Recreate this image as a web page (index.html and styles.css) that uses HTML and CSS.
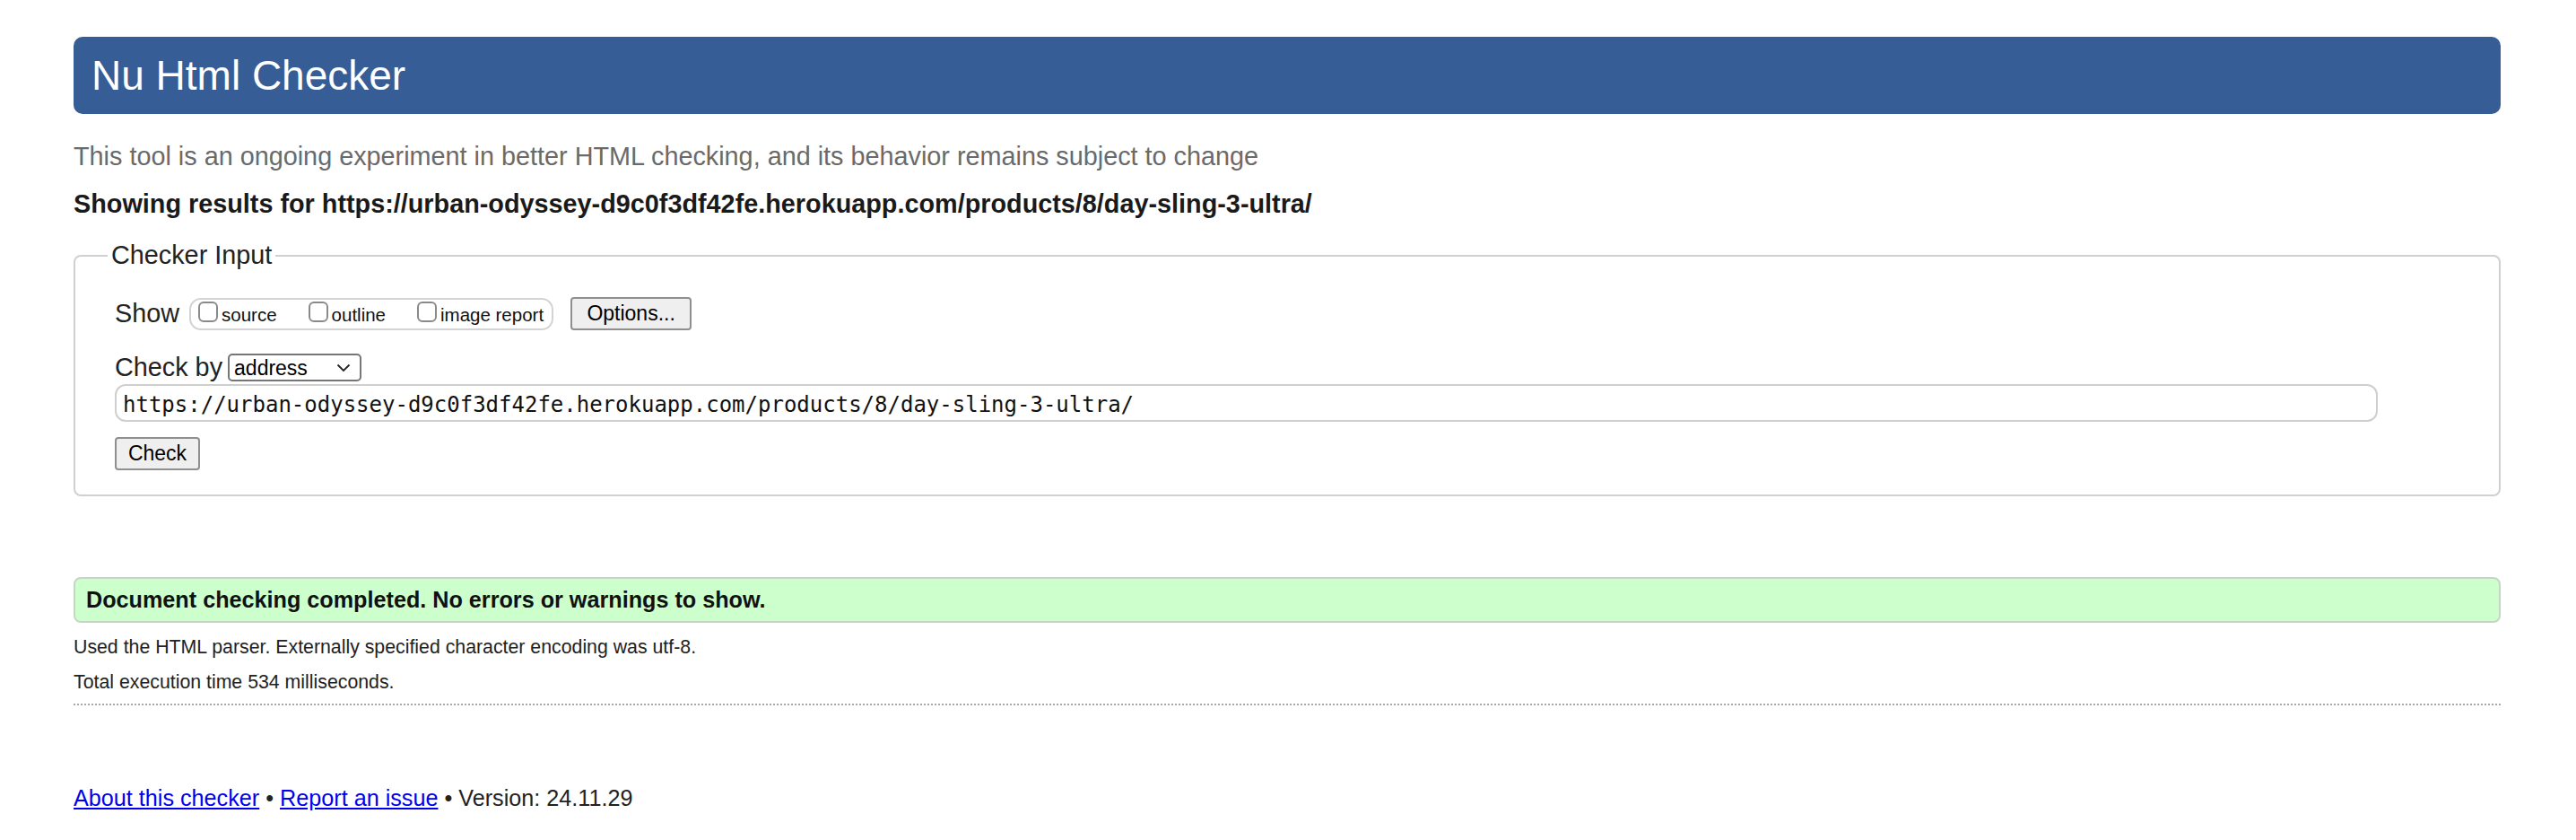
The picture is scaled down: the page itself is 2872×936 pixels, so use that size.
FILE: index.html
```html
<!DOCTYPE html>
<html lang="en">
<head>
<meta charset="utf-8">
<title>Showing results for https://urban-odyssey-d9c0f3df42fe.herokuapp.com/products/8/day-sling-3-ultra/ - Nu Html Checker</title>
<link rel="stylesheet" href="styles.css">
</head>
<body>
<h1 class="title">Nu Html Checker</h1>
<p class="intro">This tool is an ongoing experiment in better HTML checking, and its behavior remains subject to change</p>
<p class="showing">Showing results for https://urban-odyssey-d9c0f3df42fe.herokuapp.com/products/8/day-sling-3-ultra/</p>
<form class="form">
  <fieldset class="checker">
    <legend class="legend">Checker Input</legend>
    <div class="show-row">
      <span class="label">Show</span>
      <span class="opts">
        <label class="opt"><input class="cb" type="checkbox"><span>source</span></label>
        <label class="opt"><input class="cb" type="checkbox"><span>outline</span></label>
        <label class="opt"><input class="cb" type="checkbox"><span>image report</span></label>
      </span>
      <button class="btn btn-options" type="button">Options...</button>
    </div>
    <div class="by-row">
      <span class="label">Check by</span>
      <span class="select-wrap">
        <select class="select"><option>address</option></select>
        <svg class="chev" width="16" height="10" viewBox="0 0 16 10"><path d="M1.5 1.5 L8 8 L14.5 1.5" fill="none" stroke="#222" stroke-width="1.8"/></svg>
      </span>
    </div>
    <input class="url" type="text" value="https://urban-odyssey-d9c0f3df42fe.herokuapp.com/products/8/day-sling-3-ultra/">
    <div class="submit-row"><button class="btn btn-check" type="button">Check</button></div>
  </fieldset>
</form>
<p class="success">Document checking completed. No errors or warnings to show.</p>
<p class="details">Used the HTML parser. Externally specified character encoding was utf-8.</p>
<p class="details details-time">Total execution time 534 milliseconds.</p>
<hr class="rule">
<p class="footer"><a href="#">About this checker</a> • <a href="#">Report an issue</a> • Version: 24.11.29</p>
</body>
</html>
```
FILE: styles.css
```css
html {
  background: #fff;
}
body {
  margin: 0;
  padding: 0 84px 40px 82px;
  font-family: "Liberation Sans", Arial, Helvetica, sans-serif;
  color: #222;
}
.title {
  margin: 41px 0 0;
  height: 86px;
  line-height: 86px;
  padding: 0 20px;
  font-size: 46px;
  font-weight: normal;
  color: #fff;
  background: #365d95;
  border-radius: 10px;
}
.intro {
  margin: 31px 0 0;
  font-size: 28.8px;
  color: #6a6a6a;
}
.showing {
  margin: 20px 0 0;
  font-size: 28.8px;
  font-weight: bold;
  color: #1a1a1a;
}
.form {
  margin: 24px 0 0;
}
.checker {
  margin: 0;
  min-width: 0;
  border: 2px solid #d0d0d0;
  border-radius: 8px;
  padding: 0 135px 27px 44px;
}
.legend {
  font-size: 28.8px;
  padding: 0 4px;
  margin-left: -8px;
  color: #222;
}
.show-row {
  display: flex;
  align-items: center;
  margin-top: 30px;
}
.label {
  font-size: 28.8px;
  color: #222;
}
.opts {
  display: inline-flex;
  align-items: center;
  margin-left: 11px;
  padding: 3px 9px 0 8px;
  box-sizing: content-box;
  height: 29px;
  border: 2px solid #d3d3d3;
  border-radius: 13px;
  font-size: 20.5px;
  color: #111;
  gap: 35px;
}
.opt {
  display: inline-flex;
  align-items: center;
  gap: 4px;
}
.cb {
  appearance: none;
  -webkit-appearance: none;
  margin: 0 0 8px;
  width: 22px;
  height: 23px;
  border: 2px solid #8a8a8a;
  border-radius: 6px;
  background: #fff;
}
.btn {
  font-family: "Liberation Sans", Arial, sans-serif;
  font-size: 23px;
  color: #000;
  background: #efefef;
  border: 2px solid #8f8f8f;
  border-radius: 4px;
  padding: 0;
  height: 37px;
}
.btn-options {
  margin-left: 19px;
  width: 135px;
}
.by-row {
  display: flex;
  align-items: center;
  margin-top: 25px;
}
.select-wrap {
  position: relative;
  display: inline-block;
  margin-left: 6px;
  height: 31px;
}
.select {
  appearance: none;
  -webkit-appearance: none;
  display: block;
  width: 149px;
  height: 31px;
  margin: 0;
  padding: 0 0 0 5px;
  border: 2px solid #767676;
  border-radius: 5px;
  background: #fff;
  font-family: "Liberation Sans", Arial, sans-serif;
  font-size: 23px;
  color: #000;
}
.chev {
  position: absolute;
  right: 12px;
  top: 11px;
  pointer-events: none;
}
.url {
  display: block;
  box-sizing: border-box;
  width: 100%;
  height: 42px;
  margin: 2px 0 0;
  padding: 3px 0 0 7px;
  border: 2px solid #cfcfcf;
  border-radius: 12px;
  font-family: "DejaVu Sans Mono", "Liberation Mono", monospace;
  font-size: 24px;
  color: #111;
  background: #fff;
}
.submit-row {
  margin-top: 17px;
  display: flex;
}
.btn-check {
  width: 95px;
  height: 37px;
}
.success {
  margin: 90px 0 0;
  height: 47px;
  line-height: 47px;
  padding: 0 12px;
  background: #ccffcc;
  border: 2px solid #c6d6c6;
  border-radius: 8px;
  font-size: 25.2px;
  font-weight: bold;
  color: #111;
}
.details {
  margin: 15px 0 0;
  font-size: 21.3px;
  color: #222;
}
.details-time {
  margin-top: 14px;
}
.rule {
  margin: 11px 0 0;
  height: 0;
  border: 0;
  border-top: 2px dotted #a8a8a8;
}
.footer {
  margin: 89px 0 0;
  font-size: 25.2px;
  color: #222;
}
.footer a {
  color: #0000ee;
  text-decoration: underline;
}
```
